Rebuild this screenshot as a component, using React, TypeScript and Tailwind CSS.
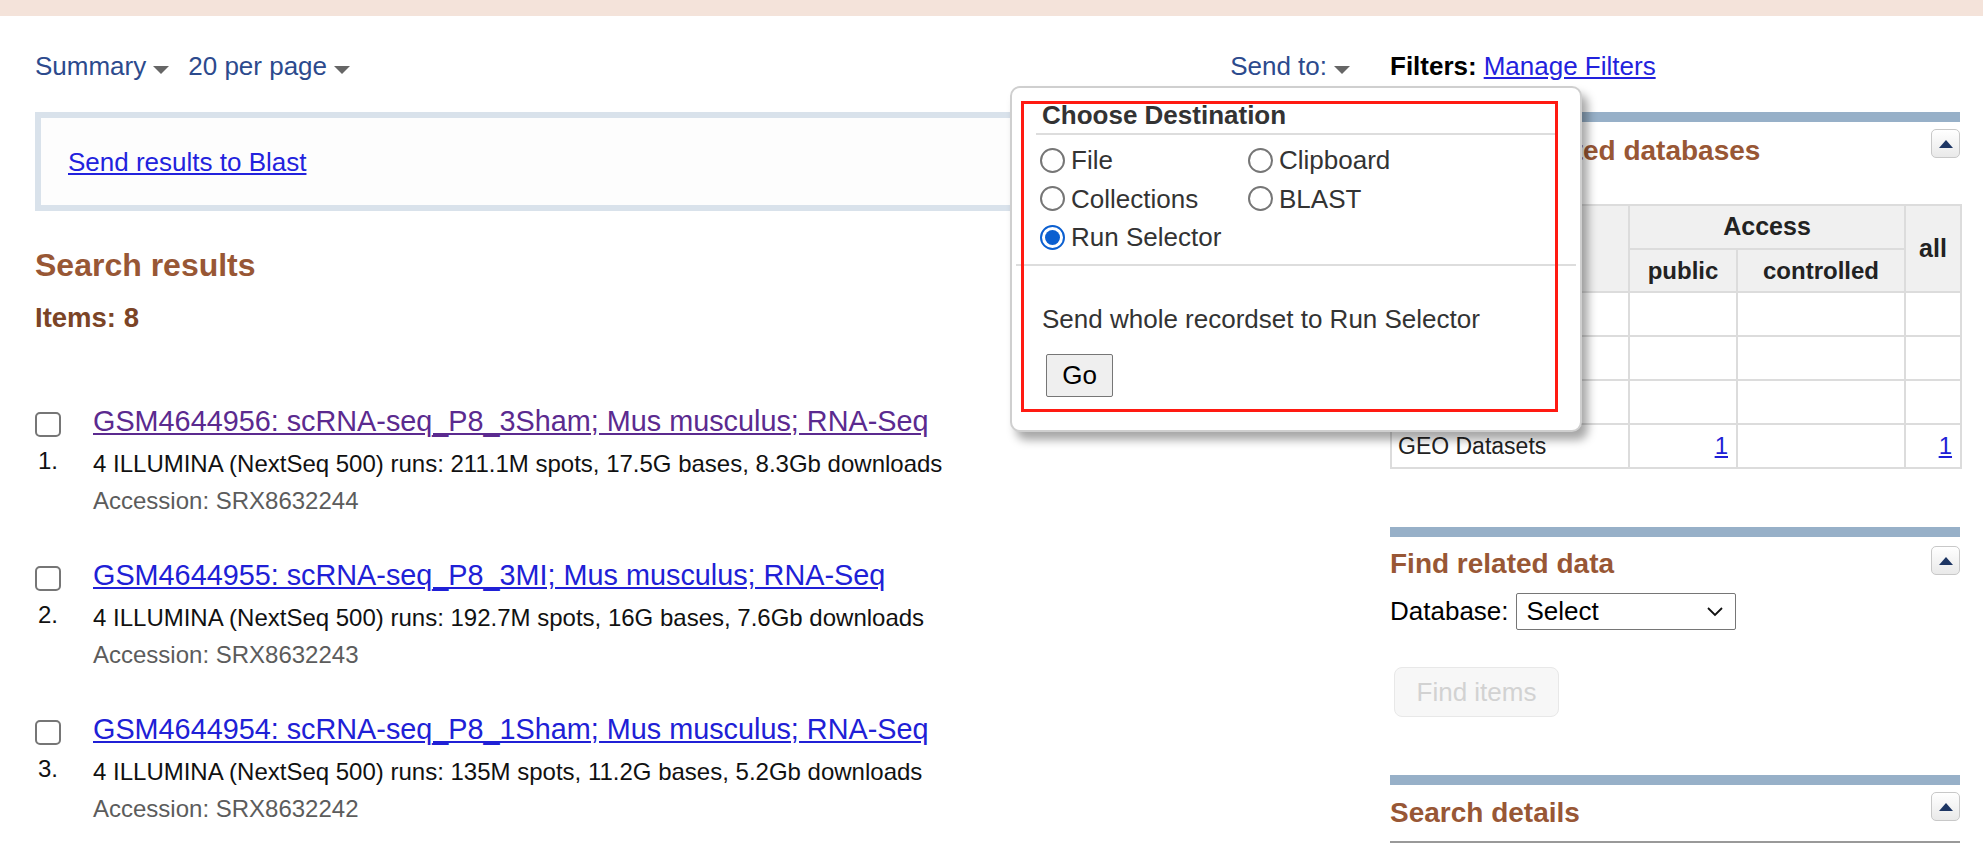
const Caret = () => (
  <svg width="16" height="8" viewBox="0 0 16 8" className="ml-[7px] mt-[8px]">
    <polygon points="0,0 16,0 8,8" fill="#666" />
  </svg>
);

const CollapseBtn = () => (
  <div className="w-[29px] h-[29px] rounded-[5px] border border-[#c8c8c8] bg-gradient-to-b from-white to-[#e9e9e9] flex items-center justify-center">
    <svg width="14" height="8" viewBox="0 0 14 8">
      <polygon points="0,8 14,8 7,0" fill="#1d3563" />
    </svg>
  </div>
);

const Radio = ({ label, checked }: { label: string; checked?: boolean }) => (
  <div className="flex items-center h-[38.5px]">
    {checked ? (
      <span className="w-[25px] h-[25px] rounded-full border-2 border-[#0b5fd0] flex items-center justify-center">
        <span className="w-[15px] h-[15px] rounded-full bg-[#0b5fd0]" />
      </span>
    ) : (
      <span className="w-[25px] h-[25px] rounded-full border-2 border-[#767676] bg-white" />
    )}
    <span className="ml-[6px]">{label}</span>
  </div>
);

interface Result {
  title: string;
  desc: string;
  acc: string;
  visited?: boolean;
}

const results: Result[] = [
  {
    title: "GSM4644956: scRNA-seq_P8_3Sham; Mus musculus; RNA-Seq",
    desc: "4 ILLUMINA (NextSeq 500) runs: 211.1M spots, 17.5G bases, 8.3Gb downloads",
    acc: "SRX8632244",
    visited: true,
  },
  {
    title: "GSM4644955: scRNA-seq_P8_3MI; Mus musculus; RNA-Seq",
    desc: "4 ILLUMINA (NextSeq 500) runs: 192.7M spots, 16G bases, 7.6Gb downloads",
    acc: "SRX8632243",
  },
  {
    title: "GSM4644954: scRNA-seq_P8_1Sham; Mus musculus; RNA-Seq",
    desc: "4 ILLUMINA (NextSeq 500) runs: 135M spots, 11.2G bases, 5.2Gb downloads",
    acc: "SRX8632242",
  },
];

const dbRows = [
  { name: "BioProject", pub: "", all: "" },
  { name: "BioSample", pub: "", all: "" },
  { name: "PubMed", pub: "", all: "" },
  { name: "GEO Datasets", pub: "1", all: "1" },
];

export default function App() {
  return (
    <div className="relative min-h-[845px] bg-white font-['Liberation_Sans',Arial,sans-serif] text-[#222]">
      <div className="h-[16px] bg-[#f4e3da]" />

      <div className="flex pl-[35px] pt-[34px]">
        {/* results column */}
        <main className="w-[1325px]">
          <div className="flex h-[32px] items-center justify-between pr-[10px] text-[26px] leading-[32px] text-[#2c4a8d]">
            <div className="flex items-center">
              <span className="flex items-center">
                Summary
                <Caret />
              </span>
              <span className="ml-[19px] flex items-center">
                20 per page
                <Caret />
              </span>
            </div>
            <span className="flex items-center">
              Send to:
              <Caret />
            </span>
          </div>

          <div className="mt-[30px] flex h-[99px] items-center border-[6px] border-[#d9e2eb] bg-[#fdfdfd] pl-[27px]">
            <a className="text-[26px] leading-[32px] text-[#2222dd] underline">Send results to Blast</a>
          </div>

          <h2 className="mt-[35px] text-[32px] font-bold leading-[38px] text-[#985735]">Search results</h2>
          <div className="mt-[19px] text-[27.5px] font-bold leading-[30px] text-[#7b4426]">Items: 8</div>

          <div className="mt-[71px]">
            {results.map((r, i) => (
              <div key={r.acc} className="mb-[39px] flex">
                <div className="w-[58px] flex-shrink-0">
                  <div className="mt-[8px] h-[25px] w-[26px] rounded-[5px] border-2 border-[#767676] bg-white" />
                  <div className="ml-[3px] mt-[10px] text-[24px] leading-[28px] text-[#111]">{i + 1}.</div>
                </div>
                <div>
                  <a
                    className={`block text-[28.8px] leading-[34px] underline ${
                      r.visited ? "text-[#5b2a8f]" : "text-[#2020d6]"
                    }`}
                  >
                    {r.title}
                  </a>
                  <div className="mt-[7px] text-[24px] leading-[37px] text-[#111]">{r.desc}</div>
                  <div className="text-[24px] leading-[37px] text-[#5c5c5c]">Accession: {r.acc}</div>
                </div>
              </div>
            ))}
          </div>
        </main>

        {/* sidebar */}
        <aside className="ml-[30px] w-[570px]">
          <div className="flex h-[32px] items-center text-[26px] leading-[32px]">
            <span className="font-bold text-black">Filters:</span>
            <a className="ml-[7px] text-[#2222dd] underline">Manage Filters</a>
          </div>

          <div className="mt-[30px] h-[10px] bg-[#97b0c8]" />
          <div className="flex items-start justify-between">
            <h3 className="mt-[13px] text-[28px] font-bold leading-[32px] text-[#985735]">
              Search in related databases
            </h3>
            <div className="mt-[7px]">
              <CollapseBtn />
            </div>
          </div>

          <table className="mt-[37px] w-[570px] table-fixed border-collapse border-2 border-[#dcdcdc] text-[24px]">
            <colgroup>
              <col className="w-[238px]" />
              <col className="w-[108px]" />
              <col className="w-[168px]" />
              <col className="w-[56px]" />
            </colgroup>
            <thead>
              <tr className="h-[44px] bg-[#f0f0f0]">
                <th rowSpan={2} className="border-2 border-[#dcdcdc]" />
                <th colSpan={2} className="border-2 border-[#dcdcdc] text-[25px] font-bold">
                  Access
                </th>
                <th rowSpan={2} className="border-2 border-[#dcdcdc] text-[25px] font-bold">
                  all
                </th>
              </tr>
              <tr className="h-[43px] bg-[#f0f0f0]">
                <th className="border-2 border-[#dcdcdc] font-bold">public</th>
                <th className="border-2 border-[#dcdcdc] font-bold">controlled</th>
              </tr>
            </thead>
            <tbody>
              {dbRows.map((row) => (
                <tr key={row.name} className="h-[44px]">
                  <td className="border-2 border-[#dcdcdc] pl-[6px] text-[23px] text-[#222]">{row.name}</td>
                  <td className="border-2 border-[#dcdcdc] pr-[8px] text-right">
                    {row.pub ? <a className="text-[#2020d6] underline">{row.pub}</a> : null}
                  </td>
                  <td className="border-2 border-[#dcdcdc]" />
                  <td className="border-2 border-[#dcdcdc] pr-[8px] text-right">
                    {row.all ? <a className="text-[#2020d6] underline">{row.all}</a> : null}
                  </td>
                </tr>
              ))}
            </tbody>
          </table>

          <div className="mt-[58px] h-[10px] bg-[#97b0c8]" />
          <div className="flex items-start justify-between">
            <h3 className="mt-[11px] text-[28px] font-bold leading-[32px] text-[#985735]">Find related data</h3>
            <div className="mt-[9px]">
              <CollapseBtn />
            </div>
          </div>
          <div className="mt-[12px] flex items-center text-[26px] text-black">
            <span>Database:</span>
            <div className="ml-[7px] flex h-[37px] w-[220px] items-center justify-between rounded-[2px] border border-[#767676] pl-[10px] pr-[12px]">
              <span>Select</span>
              <svg width="16" height="10" viewBox="0 0 16 10">
                <polyline points="1,1 8,8 15,1" fill="none" stroke="#111" strokeWidth="1.8" />
              </svg>
            </div>
          </div>
          <div className="ml-[4px] mt-[36px] flex h-[50px] w-[165px] items-center justify-center rounded-[8px] border border-[#e8e8e8] bg-[#f7f7f7] text-[26px] text-[#d2d2d2]">
            Find items
          </div>

          <div className="mt-[58px] h-[10px] bg-[#97b0c8]" />
          <div className="flex items-start justify-between">
            <h3 className="mt-[12px] text-[28px] font-bold leading-[32px] text-[#985735]">Search details</h3>
            <div className="mt-[7px]">
              <CollapseBtn />
            </div>
          </div>
          <div className="mt-[12px] h-[2px] bg-[#999]" />
        </aside>
      </div>

      {/* Send to popup */}
      <div className="absolute left-[1010px] top-[86px] w-[572px] rounded-[10px] border-2 border-[#cfcfcf] bg-white px-[4px] pb-[33px] text-[26px] text-[#333] shadow-[6px_8px_10px_rgba(0,0,0,0.35)]">
        <div className="ml-[20px] mr-[18px]">
          <div className="mt-[12px] border-b-2 border-[#dddddd] pb-[3px] pl-[6px] font-bold leading-[30px]">
            Choose Destination
          </div>
          <div className="mt-[6px] grid grid-cols-[208px_1fr] pl-[4px] leading-[30px]">
            <Radio label="File" />
            <Radio label="Clipboard" />
            <Radio label="Collections" />
            <Radio label="BLAST" />
            <Radio label="Run Selector" checked />
          </div>
        </div>
        <div className="mt-[7.5px] h-[2px] bg-[#dddddd]" />
        <div className="ml-[26px] mt-[38px] leading-[30px]">Send whole recordset to Run Selector</div>
        <div className="ml-[30px] mt-[20px] flex h-[43px] w-[67px] items-center justify-center rounded-[2px] border border-[#767676] bg-[#efefef] text-black">
          Go
        </div>
        <div className="pointer-events-none absolute left-[9px] top-[13px] h-[311px] w-[537px] border-[3px] border-[#ff1a12]" />
      </div>
    </div>
  );
}
